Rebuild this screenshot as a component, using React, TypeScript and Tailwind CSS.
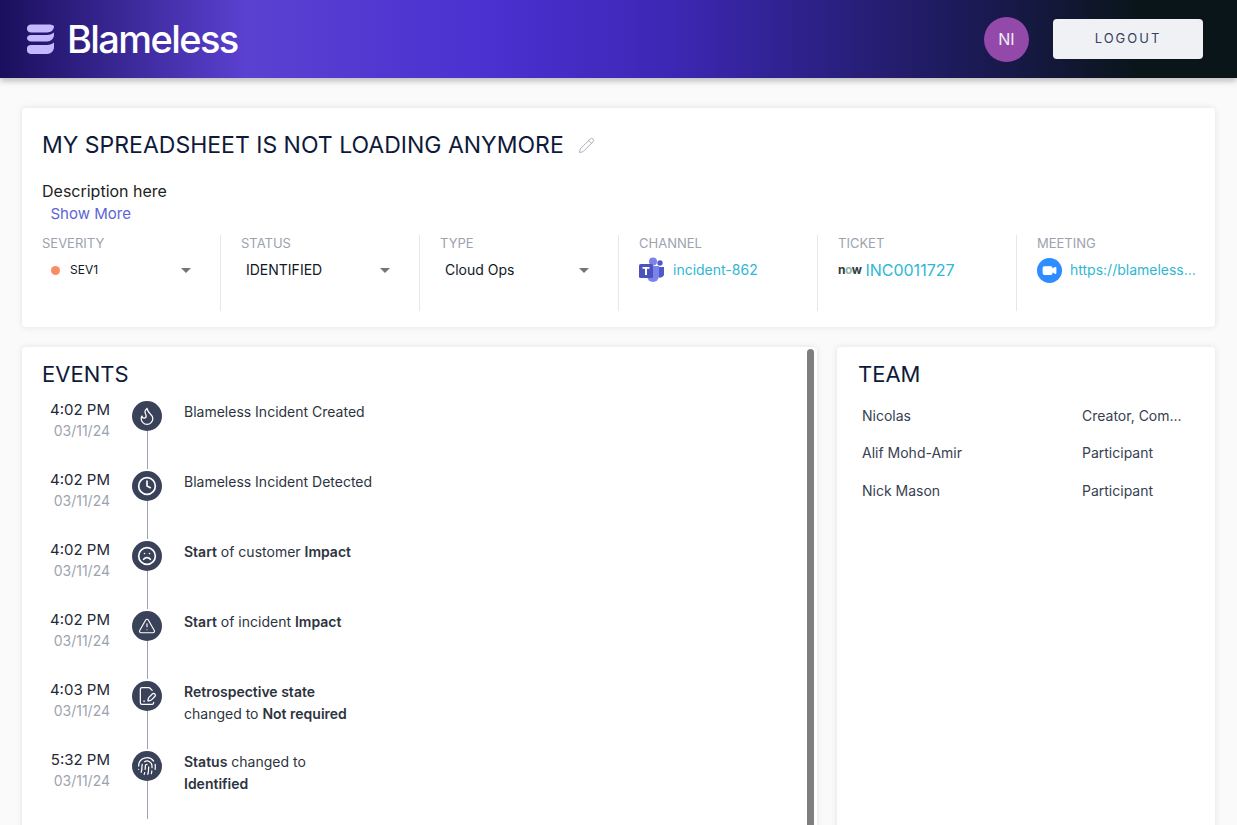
import { Pencil, Clock, TriangleAlert, Flame, Frown, FilePenLine, Fingerprint, Video } from "lucide-react";
import type { ReactNode } from "react";

const Arrow = () => <span className="h-0 w-0 border-x-[5px] border-t-[5px] border-x-transparent border-t-[#757575]" />;

const Logo = () => (
  <svg width="28" height="31" viewBox="0 0 28 31" fill="#c4b8ff">
    <path d="M0 4c0-2 2-3.500 4-3.500h17c3 0 6 .5 6 2 0 3-3 6-7 6H4C2 8.500 0 7 0 5z" />
    <path d="M0 14c0-2 2-3 4-3h16c3 0 5-1 7-2.500V11c0 3-3 6.500-7 6.500H4c-2 0-4-1.500-4-3.500z" />
    <path d="M0 24c0-2 2-3 4-3h16c3 0 5-1 7-2.500V23c0 4-3 7-7 7H4c-2 0-4-1.500-4-3.500z" />
  </svg>
);

const Teams = () => (
  <svg width="26" height="26" viewBox="0 0 26 26">
    <circle cx="21" cy="6" r="2.700" fill="#5059c9" />
    <path d="M18 10h7v8a4 4 0 0 1-7 1z" fill="#5059c9" />
    <circle cx="14" cy="4.500" r="4" fill="#7b83eb" />
    <path d="M8 9h12v10a6 6 0 0 1-12 0z" fill="#7b83eb" />
    <rect x="0" y="7" width="14" height="14" rx="1.500" fill="#4b53bc" />
    <path d="M3.500 10h7v1.800H8V18H6v-6.200H3.500z" fill="#fff" />
  </svg>
);

const Zoom = () => (
  <span className="flex h-[25px] w-[25px] shrink-0 items-center justify-center rounded-full bg-[#2d8cff]">
    <Video size={15} fill="#fff" stroke="#fff" />
  </span>
);

const Field = ({ label, children, last }: { label: string; children: ReactNode; last?: boolean }) => (
  <div className={`min-w-0 flex-1 pl-5 pr-4 ${last ? "" : "border-r border-[#e5e7eb]"}`}>
    <div className="text-[13px] leading-4 text-[#9ca3af]">{label}</div>
    <div className="mt-[5px] flex h-7 items-center">{children}</div>
  </div>
);

const events = [
  { time: "4:02 PM", icon: <Flame size={20} strokeWidth={1.500} />, text: <>Blameless Incident Created</> },
  { time: "4:02 PM", icon: <Clock size={20} strokeWidth={2} />, text: <>Blameless Incident Detected</> },
  {
    time: "4:02 PM",
    icon: <Frown size={20} strokeWidth={2} />,
    text: (
      <>
        <b className="font-semibold">Start</b> of customer <b className="font-semibold">Impact</b>
      </>
    ),
  },
  {
    time: "4:02 PM",
    icon: <TriangleAlert size={18} strokeWidth={1.500} />,
    text: (
      <>
        <b className="font-semibold">Start</b> of incident <b className="font-semibold">Impact</b>
      </>
    ),
  },
  {
    time: "4:03 PM",
    icon: <FilePenLine size={20} strokeWidth={1.500} />,
    text: (
      <>
        <b className="font-semibold">Retrospective state</b>
        <br />
        changed to <b className="font-semibold">Not required</b>
      </>
    ),
  },
  {
    time: "5:32 PM",
    icon: <Fingerprint size={20} strokeWidth={1.500} />,
    text: (
      <>
        <b className="font-semibold">Status</b> changed to
        <br />
        <b className="font-semibold">Identified</b>
      </>
    ),
  },
];

const team = [
  { name: "Nicolas", role: "Creator, Com..." },
  { name: "Alif Mohd-Amir", role: "Participant" },
  { name: "Nick Mason", role: "Participant" },
];

export default function App() {
  return (
    <div className="flex h-[825px] flex-col overflow-hidden bg-[#fafafa] font-['Inter',sans-serif] text-[#111827]">
      <header className="z-10 flex h-[78px] shrink-0 items-center justify-between bg-[linear-gradient(90deg,#1a0f5c_0%,#5b41d1_20%,#4a30d0_40%,#3d27b5_54%,#1c1a58_78%,#0a151a_92%)] pl-[27px] pr-[34px] shadow-[0_3px_6px_rgba(0,0,0,0.25)]">
        <div className="flex items-center gap-[12px]">
          <Logo />
          <span className="text-[38px] font-medium leading-none tracking-[-1.600px] text-white">Blameless</span>
        </div>
        <div className="flex items-center gap-6">
          <div className="flex h-[45px] w-[45px] items-center justify-center rounded-full bg-[#9349aa] text-base text-white/90">NI</div>
          <button className="h-10 w-[150px] rounded bg-[#f0f1f5] text-[13px] tracking-[2px] text-[#374162]">LOGOUT</button>
        </div>
      </header>

      <main className="flex flex-col gap-5 px-[22px] pt-[30px]">
        <section className="h-[219px] rounded bg-white shadow-[0_0_6px_rgba(0,0,0,0.1)]">
          <div className="flex items-center gap-[14px] px-5 pt-[22px]">
            <h1 className="text-[23px] font-normal leading-[30px] text-[#0f1a3a]">MY SPREADSHEET IS NOT LOADING ANYMORE</h1>
            <Pencil size={17} strokeWidth={1.200} className="text-[#9ca3af]" />
          </div>
          <p className="mt-[19px] px-5 text-base leading-6 text-[#222]">Description here</p>
          <p className="mt-[1px] pl-[28.500px] text-[15px] leading-5 text-[#5c63d8]">Show More</p>
          <div className="mt-[11px] flex h-[76px]">
            <Field label="SEVERITY">
              <span className="ml-[9px] h-[9px] w-[9px] rounded-full bg-[#fb8c5f]" />
              <span className="ml-[10px] flex-1 text-xs text-[#111827]">SEV1</span>
              <span className="mr-[13px] flex"><Arrow /></span>
            </Field>
            <Field label="STATUS">
              <span className="ml-[5px] flex-1 text-sm text-[#111827]">IDENTIFIED</span>
              <span className="mr-[13px] flex"><Arrow /></span>
            </Field>
            <Field label="TYPE">
              <span className="ml-[5px] flex-1 text-sm text-[#111827]">Cloud Ops</span>
              <span className="mr-[13px] flex"><Arrow /></span>
            </Field>
            <Field label="CHANNEL">
              <Teams />
              <span className="ml-2 text-sm text-[#2fb7d3]">incident-862</span>
            </Field>
            <Field label="TICKET">
              <span className="text-[12px] font-bold tracking-[-0.500px] text-[#2f3d3d]">n<span className="text-[#8fb8a8]">o</span>w</span>
              <span className="ml-1 text-base text-[#2fb7d3]">INC0011727</span>
            </Field>
            <Field label="MEETING" last>
              <Zoom />
              <span className="ml-2 truncate text-sm text-[#2fb7d3]">https://blameless.zoom.us/j/1234</span>
            </Field>
          </div>
        </section>

        <div className="flex items-start gap-5">
          <section className="relative h-[600px] w-[795px] rounded bg-white px-5 pt-3 shadow-[0_0_6px_rgba(0,0,0,0.1)]">
            <h2 className="text-[22px] font-normal leading-[30px] text-[#0f1a3a]">EVENTS</h2>
            <div className="absolute right-[3px] top-[2px] h-[600px] w-[7px] rounded bg-[#7f7f7f]" />
            <ul className="mt-[10px]">
              {events.map((e, i) => (
                <li key={i} className="flex h-[70px]">
                  <div className="w-[68px] text-right">
                    <div className="text-[15px] leading-[22px] text-[#1f2937]">{e.time}</div>
                    <div className="text-sm leading-[20px] text-[#9ca3af]">03/11/24</div>
                  </div>
                  <div className="relative ml-[22px] flex w-[30px] flex-col items-center pt-[2px]">
                    <div className="flex h-[30px] w-[30px] shrink-0 items-center justify-center rounded-full bg-[#3a4259] text-white">{e.icon}</div>
                    <div className="w-px flex-1 bg-[#9ca3af]" />
                    <div className="h-[2px] w-px bg-[#9ca3af]" />
                  </div>
                  <div className="ml-[22px] pt-[2px] text-sm leading-[22px] text-[#2d3440]">{e.text}</div>
                </li>
              ))}
            </ul>
          </section>

          <section className="h-[600px] flex-1 rounded bg-white px-[21px] pt-3 shadow-[0_0_6px_rgba(0,0,0,0.1)]">
            <h2 className="text-[22px] font-normal leading-[30px] text-[#0f1a3a]">TEAM</h2>
            <div className="mt-[8px] flex flex-col">
              {team.map((m) => (
                <div key={m.name} className="flex h-[37.500px] items-center pl-[4px] text-sm text-[#374151]">
                  <span className="w-[220px]">{m.name}</span>
                  <span>{m.role}</span>
                </div>
              ))}
            </div>
          </section>
        </div>
      </main>
    </div>
  );
}
